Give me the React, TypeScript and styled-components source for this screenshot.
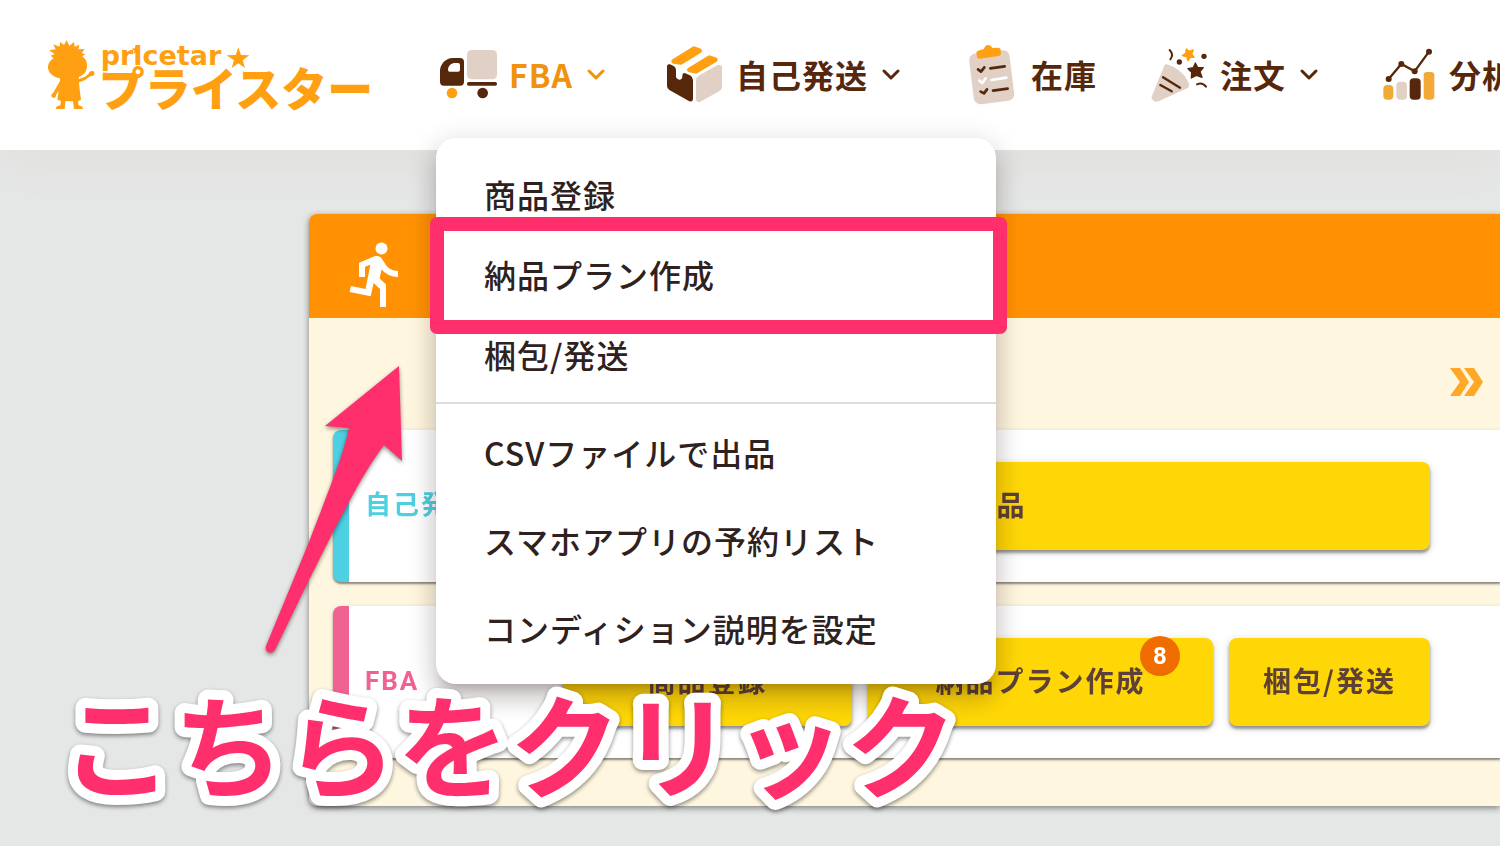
import React from "react";
import styled, { createGlobalStyle } from "styled-components";

const color = {
  brown: "#56270b",
  orange: "#ff9f12",
  beige: "#e1d0c6",
  accent: "#ef930f",
  ink: "#2f211d",
  pink: "#ff2e6c",
};

const GlobalStyle = createGlobalStyle`
  *, *::before, *::after { box-sizing: border-box; }
  body {
    margin: 0;
    background: #e5e7e6;
    font-family: "Noto Sans CJK JP", "Noto Sans", sans-serif;
    color: ${color.ink};
  }
  button { font: inherit; color: inherit; border: 0; cursor: pointer; }
  a { color: inherit; text-decoration: none; }
  ul { list-style: none; margin: 0; padding: 0; }
  svg { display: block; flex: none; }
`;

const Page = styled.div`
  position: relative;
  min-height: 100vh;
  padding-bottom: 40px;
  overflow: hidden;
`;

const Header = styled.header`
  position: relative;
  z-index: 2;
  display: flex;
  align-items: center;
  gap: 66px;
  height: 150px;
  padding-left: 48px;
  background: #fff;
  box-shadow: 0 8px 56px rgba(140, 80, 40, 0.05);
`;

const NavList = styled.ul`
  display: flex;
  gap: 52px;
`;

const NavItem = styled.li`
  position: relative;
  display: flex;
  align-items: center;
  height: 150px;
  flex: none;
`;

const NavButton = styled.button<{ $active?: boolean }>`
  display: flex;
  align-items: center;
  padding: 0;
  background: none;
  font-size: 32px;
  line-height: 48px;
  font-weight: 700;
  letter-spacing: 1px;
  white-space: nowrap;
  color: ${(p) => (p.$active ? color.accent : color.brown)};
`;

const NavText = styled.span`
  margin-left: 11px;
  padding-bottom: 2px;
`;

const Chevron = styled.svg`
  margin-left: 8px;
`;

const Menu = styled.ul`
  position: absolute;
  top: 138px;
  left: -2px;
  width: 560px;
  padding: 18px 0 10px;
  border-radius: 20px;
  background: #fff;
  box-shadow: 0 10px 10px -6px rgba(40, 20, 20, 0.2), 0 16px 20px 2px rgba(40, 20, 20, 0.14),
    0 6px 28px 4px rgba(40, 20, 20, 0.12);
`;

const MenuItem = styled.li<{ $tall?: boolean }>`
  position: relative;
  display: flex;
  align-items: center;
  height: ${(p) => (p.$tall ? 88 : 80)}px;
`;

const MenuLink = styled.a`
  flex: 1;
  padding: 0 48px 4px;
  font-size: 32px;
  line-height: 48px;
  font-weight: 500;
  letter-spacing: 1px;
`;

const MenuDivider = styled.li`
  height: 2px;
  margin: 6px 0;
  background: #e0dcda;
`;

/* Covers the second menu entry, painted after all of them. */
const HighlightSlot = styled.li`
  position: absolute;
  top: 98px;
  left: 0;
  right: 0;
  height: 80px;
  pointer-events: none;
`;

const Highlight = styled.span`
  position: absolute;
  inset: -19px -11px -18px -6px;
  border: 14px solid ${color.pink};
  border-radius: 7px;
`;

const Board = styled.main`
  margin: 64px 0 0 309px;
  padding-bottom: 48px;
  border-radius: 8px 0 0 8px;
  overflow: hidden;
  background: #fef6df;
`;

const BoardShadow = styled.div`
  filter: drop-shadow(0 2px 3px rgba(0, 0, 0, 0.45));
`;

const BoardHeader = styled.div`
  height: 104px;
  padding: 24px 32px 8px;
  background: #ff9103;
`;

const Steps = styled.div`
  display: flex;
  align-items: center;
  justify-content: flex-end;
  height: 112px;
  padding: 16px 16px 0 0;
`;

const Rows = styled.div`
  display: flex;
  flex-direction: column;
  gap: 24px;
  padding-left: 24px;
`;

const Row = styled.section<{ $tone: string }>`
  display: flex;
  align-items: center;
  padding: 32px 70px 32px 16px;
  border-left: 16px solid ${(p) => p.$tone};
  border-radius: 8px 0 0 8px;
  background: #fff;
  box-shadow: 0 2px 2px rgba(0, 0, 0, 0.4), 0 1px 5px rgba(0, 0, 0, 0.12);
`;

const RowTitle = styled.h2<{ $tone: string }>`
  flex: none;
  width: 198px;
  margin: 0;
  padding-bottom: 2px;
  font-family: Roboto, "Noto Sans CJK JP", sans-serif;
  font-size: 26px;
  line-height: 40px;
  font-weight: 700;
  letter-spacing: 2px;
  color: ${(p) => p.$tone};
`;

const Actions = styled.div`
  display: flex;
  flex: 1;
  gap: 16px;
`;

const ActionButton = styled.button<{ $share: number }>`
  position: relative;
  flex: ${(p) => p.$share} 1 0;
  height: 88px;
  padding: 0 0 4px;
  border-radius: 8px;
  background: #ffd707;
  box-shadow: 0 3px 3px rgba(0, 0, 0, 0.36), 0 2px 8px rgba(0, 0, 0, 0.16);
  font-size: 28px;
  line-height: 40px;
  font-weight: 700;
  letter-spacing: 2px;
  white-space: nowrap;
  color: #5d4037;
`;

const Badge = styled.span`
  position: absolute;
  top: -2px;
  right: 33px;
  width: 40px;
  height: 40px;
  border-radius: 50%;
  background: #ef6c00;
  color: #fff;
  font-family: Roboto, sans-serif;
  font-size: 24px;
  font-weight: 700;
  line-height: 40px;
  letter-spacing: 0;
  text-align: center;
`;

const Arrow = styled.svg`
  position: absolute;
  z-index: 3;
  top: 360px;
  left: 260px;
  filter: drop-shadow(0 2px 2px rgba(0, 0, 0, 0.45));
  pointer-events: none;
`;

const Caption = styled.svg`
  position: absolute;
  z-index: 3;
  top: 670px;
  left: 50px;
  filter: drop-shadow(0 2px 2px rgba(0, 0, 0, 0.45));
  pointer-events: none;

  text {
    font-size: 112px;
    font-weight: 700;
    fill: ${color.pink};
    stroke: #fff;
    stroke-width: 20px;
    stroke-linejoin: round;
    paint-order: stroke;
  }
`;

const LogoText = styled.text<{ $latin?: boolean }>`
  fill: ${color.orange};
  font-family: ${(p) => (p.$latin ? '"DejaVu Sans"' : '"Noto Sans CJK JP"')}, sans-serif;
  font-size: ${(p) => (p.$latin ? 81 : 138)}px;
  font-weight: ${(p) => (p.$latin ? 700 : 900)};
`;

function Logo() {
  return (
    <svg width="324" height="72" viewBox="54 39 972 216" role="img" aria-label="pricetar プライスター">
      <g fill={color.orange}>
        <path d="M62 89 74 84 57 73 77 70 70 55 88 62 91 48 102 57 110 43 118 59 132 48 134 62 148 56 145 70 164 69 155 82 166 85 157 91 165 99C170 105 172 113 171 122 170 137 160 148 147 152L146 160 165 152 176 143C177 136 184 133 190 136 196 140 195 148 188 150L181 151 164 163 147 169 149 191 153 222 145 225 145 238C153 239 159 243 159 249L132 249 129 226 106 226 104 249 77 249C78 242 83 239 91 238L93 225 82 221 86 195 78 207C79 214 73 218 67 214 62 210 63 203 70 200L83 177 90 165 90 157C71 153 56 143 54 126 54 111 61 103 71 97Z" />
        <path d="M319 57 323 67 333 68 325 74 328 84 319 78 310 84 313 74 305 68 315 67Z" />
        <path d="M625 64 633 87 658 88 638 103 645 126 625 112 605 126 612 103 590 88 617 87Z" />
      </g>
      <LogoText $latin x="212" y="118">pricetar</LogoText>
      <LogoText x="206" y="239">プライスター</LogoText>
    </svg>
  );
}

function TruckIcon() {
  return (
    <svg width="60" height="60" viewBox="24 30 180 180" aria-hidden="true">
      <rect x="111" y="45" width="90" height="88" rx="14" fill={color.beige} />
      <path fillRule="evenodd" fill={color.brown} d="M30 105C32 86 48 69 68 69H90Q102 69 102 81V140Q102 152 90 152H42Q30 152 30 140ZM54 105Q54 110 59 110H84Q90 110 90 104V90Q90 84 84 84H76C64 84 54 92 54 105Z" />
      <rect x="111" y="141" width="90" height="11" rx="5" fill={color.brown} />
      <circle cx="66" cy="174" r="16" fill={color.orange} />
      <circle cx="158" cy="174" r="16" fill={color.brown} />
    </svg>
  );
}

function BoxIcon() {
  return (
    <svg width="60" height="60" viewBox="45 30 180 180" aria-hidden="true">
      <g stroke={color.orange} strokeWidth="14" strokeLinejoin="round" fill={color.orange}>
        <path d="M71 79 132 41 149 47 93 82Z" />
        <path d="M118 105 178 68 196 74 138 109Z" />
      </g>
      <path fill={color.brown} d="M51 92Q53 86 60 88L72 94Q78 98 78 105V127Q82 135 90 134 97 133 97 126V121Q97 114 104 114L120 121Q129 126 129 135V192Q128 202 118 199L58 165Q51 161 51 153Z" />
      <path fill={color.beige} d="M138 136Q138 127 146 122L203 90Q214 86 216 97V155Q216 163 209 168L151 200Q140 204 138 192Z" />
    </svg>
  );
}

function ClipboardIcon() {
  return (
    <svg width="60" height="60" viewBox="57 45 180 180" aria-hidden="true">
      <rect x="91" y="65" width="122" height="153" rx="20" fill={color.beige} transform="rotate(-7 152 141)" />
      <path fill={color.orange} d="M111 62 129 57Q132 45 141 45 150 45 154 54L172 53Q178 53 179 60L180 70Q180 77 173 78L116 86Q109 87 108 80L106 69Q106 64 111 62Z" />
      <g fill="none" strokeWidth="8" strokeLinecap="round" strokeLinejoin="round" stroke={color.brown}>
        <path d="M111 118 120 125 130 112M148 115 191 109" />
        <path stroke="#fff" d="M115 152 124 159 134 145M152 150 196 143" />
        <path d="M119 185 129 190 138 178M156 182 200 176" />
      </g>
    </svg>
  );
}

function PartyIcon() {
  return (
    <svg width="60" height="60" viewBox="621 45 180 180" aria-hidden="true">
      <path fill={color.beige} d="M667 107Q670 101 679 104C705 112 730 133 740 158Q744 170 735 175L650 214Q635 219 629 205Q628 201 630 197Z" />
      <g fill="none" stroke={color.brown} strokeWidth="7" strokeLinecap="round">
        <path d="M663 142 714 173M655 165 689 184" />
        <path strokeWidth="6" d="M683 60Q696 74 685 88M765 163Q781 155 792 170" />
      </g>
      <circle cx="712" cy="96" r="8" fill={color.brown} />
      <circle cx="786" cy="79" r="8" fill={color.brown} />
      <path fill={color.orange} stroke={color.orange} strokeWidth="4" strokeLinejoin="round" d="M733 57 741 64 754 60 749 72 756 82 744 82 738 92 734 80 721 77 731 70Z" />
      <path fill={color.brown} stroke={color.brown} strokeWidth="4" strokeLinejoin="round" d="M760 99 767 113 784 113 774 125 780 142 763 136 748 144 749 127 738 116 754 113Z" />
    </svg>
  );
}

function ChartIcon() {
  return (
    <svg width="60" height="60" viewBox="525 45 180 180" aria-hidden="true">
      <rect x="541" y="165" width="30" height="44" rx="12" fill="#f3a935" />
      <rect x="580" y="155" width="32" height="54" rx="12" fill={color.beige} />
      <rect x="620" y="145" width="33" height="64" rx="12" fill={color.brown} />
      <rect x="662" y="126" width="32" height="83" rx="10" fill="#f3a935" />
      <path d="M557 147 595 102 635 124 678 65" fill="none" stroke={color.brown} strokeWidth="7" />
      <g fill={color.brown}>
        <circle cx="557" cy="147" r="9" />
        <circle cx="595" cy="102" r="9" />
        <circle cx="635" cy="124" r="9" />
        <circle cx="678" cy="65" r="9" />
      </g>
    </svg>
  );
}

function ChevronDown() {
  return (
    <Chevron width="32" height="32" viewBox="0 0 32 32" fill="none" stroke="currentColor" strokeWidth="3" strokeLinecap="round" strokeLinejoin="round" aria-hidden="true">
      <path d="M8 12 15 19 22 12" />
    </Chevron>
  );
}

function RunIcon() {
  return (
    <svg width="72" height="72" viewBox="0 0 24 24" fill="#fff" aria-hidden="true">
      <circle cx="13.5" cy="3.5" r="2" />
      <path d="M9.89 19.38 10.89 15 13 17V23H15V15.5L12.89 13.5 13.5 10.5C14.79 12 16.79 13 19 13V11C17.09 11 15.5 10 14.69 8.58L13.69 7C13.29 6.38 12.69 6 12 6 11.69 6 11.5 6.08 11.19 6.08L6 8.28V13H8V9.58L9.79 8.88 8.19 17 3.29 16 2.89 18Z" />
    </svg>
  );
}

type NavEntry = { label: string; Icon: () => React.JSX.Element; expandable?: boolean; active?: boolean };

const nav: NavEntry[] = [
  { label: "FBA", Icon: TruckIcon, expandable: true, active: true },
  { label: "自己発送", Icon: BoxIcon, expandable: true },
  { label: "在庫", Icon: ClipboardIcon },
  { label: "注文", Icon: PartyIcon, expandable: true },
  { label: "分析", Icon: ChartIcon },
];

type Action = { label: string; share: number; count?: number };

const rows: { title: string; tone: string; actions: Action[] }[] = [
  { title: "自己発送", tone: "#4dd0e1", actions: [{ label: "出品", share: 1 }] },
  {
    title: "FBA",
    tone: "#f06292",
    actions: [
      { label: "商品登録", share: 289 },
      { label: "納品プラン作成", share: 345, count: 8 },
      { label: "梱包/発送", share: 201 },
    ],
  },
];

function FbaMenu() {
  return (
    <Menu>
      <MenuItem><MenuLink href="#register">商品登録</MenuLink></MenuItem>
      <MenuItem><MenuLink href="#plan">納品プラン作成</MenuLink></MenuItem>
      <MenuItem><MenuLink href="#packing">梱包/発送</MenuLink></MenuItem>
      <MenuDivider role="separator" />
      <MenuItem $tall><MenuLink href="#csv">CSVファイルで出品</MenuLink></MenuItem>
      <MenuItem $tall><MenuLink href="#reserved">スマホアプリの予約リスト</MenuLink></MenuItem>
      <MenuItem $tall><MenuLink href="#condition">コンディション説明を設定</MenuLink></MenuItem>
      <HighlightSlot aria-hidden="true"><Highlight /></HighlightSlot>
    </Menu>
  );
}

export default function App() {
  return (
    <Page>
      <GlobalStyle />
      <Header>
        <a href="#home"><Logo /></a>
        <nav>
          <NavList>
            {nav.map(({ label, Icon, expandable, active }) => (
              <NavItem key={label}>
                <NavButton type="button" $active={active} aria-expanded={expandable ? !!active : undefined}>
                  <Icon />
                  <NavText>{label}</NavText>
                  {expandable && <ChevronDown />}
                </NavButton>
                {active && <FbaMenu />}
              </NavItem>
            ))}
          </NavList>
        </nav>
      </Header>

      <BoardShadow>
        <Board>
          <BoardHeader><RunIcon /></BoardHeader>
          <Steps>
            <svg width="34" height="28" viewBox="0 0 34 28" fill="#ffa726" aria-hidden="true">
              <path d="M0 0H10L19 14 10 28H0L10 14ZM14 0H24L33 14 24 28H14L24 14Z" />
            </svg>
          </Steps>
          <Rows>
            {rows.map((row) => (
              <Row key={row.title} $tone={row.tone}>
                <RowTitle $tone={row.tone}>{row.title}</RowTitle>
                <Actions>
                  {row.actions.map((action) => (
                    <ActionButton key={action.label} type="button" $share={action.share}>
                      {action.label}
                      {action.count !== undefined && <Badge>{action.count}</Badge>}
                    </ActionButton>
                  ))}
                </Actions>
              </Row>
            ))}
          </Rows>
        </Board>
      </BoardShadow>

      <Arrow width="150" height="300" viewBox="260 360 150 300" aria-hidden="true">
        <path fill={color.pink} d="M399 366 325 426 349 428C343 455 334 477 309 542L266 646C264 653 272 655 275 650L309 580 334 530 349 502C360 481 372 461 384 445L402 461Z" />
      </Arrow>
      <Caption width="940" height="160" viewBox="0 0 940 160">
        <text x="11" y="120">こちらをクリック</text>
      </Caption>
    </Page>
  );
}
